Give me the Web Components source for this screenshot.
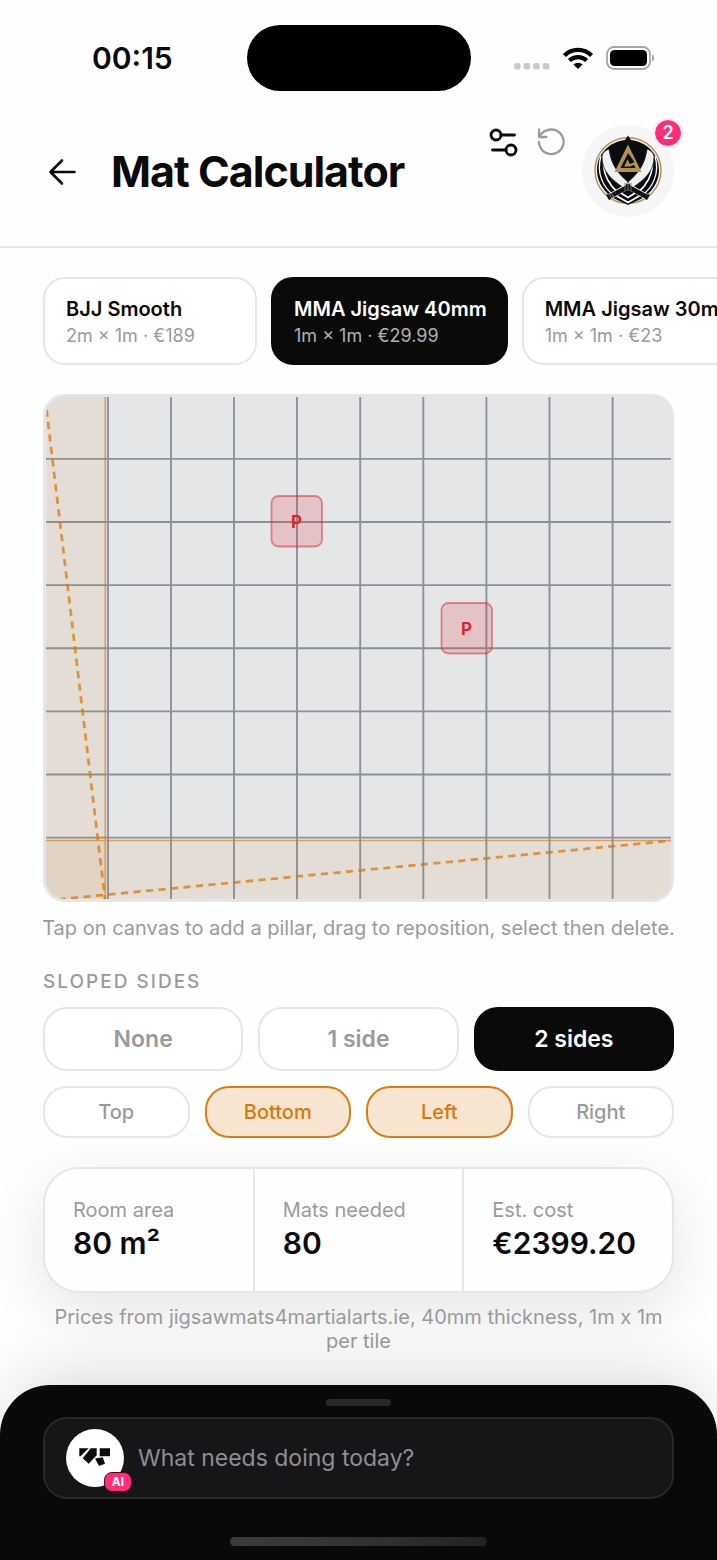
<!DOCTYPE html>
<html lang="en">
<head>
<meta charset="utf-8">
<meta name="viewport" content="width=device-width, initial-scale=1">
<title>Mat Calculator</title>
<style>
html, body { margin: 0; }
body { background: #fefefe; color: #0a0a0b; font-family: Inter, "Liberation Sans", sans-serif; font-size: 20px; line-height: 24px; --ink: #0a0a0b; --muted: #9a9a9c; --line: #e5e5ea; --amber: #d97706; --pink: #ff2d78; --gutter: 43px; }
</style>
</head>
<body>
<mat-app></mat-app>
<script>
function define(name, html) {
  const t = document.createElement('template');
  t.innerHTML = '<style>*{box-sizing:border-box}button{font:inherit;color:inherit;margin:0;cursor:pointer}svg{display:block}</style>' + html;
  customElements.define(name, class extends HTMLElement {
    constructor() { super(); this.attachShadow({ mode: 'open' }).append(t.content.cloneNode(true)); }
  });
}

define('status-bar', `
<style>
:host { display: grid; grid-template-columns: 1fr 224px 1fr; align-items: center; padding: 25px 61px 0; height: 91px; box-sizing: border-box; }
time { margin-left: 31px; font-size: 30px; font-weight: 600; line-height: 36px; }
.island { height: 66px; border-radius: 33px; background: #000; }
.icons { display: flex; justify-content: flex-end; align-items: center; gap: 12px; }
</style>
<time>00:15</time><div class="island"></div>
<div class="icons">
<svg width="36" height="24" viewBox="0 0 36 24" fill="#c9c9cb"><rect x="0" y="17" width="6.600" height="6.600" rx="2.400"/><rect x="9.600" y="17" width="6.600" height="6.600" rx="2.400"/><rect x="19.200" y="17" width="6.600" height="6.600" rx="2.400"/><rect x="28.800" y="17" width="6.600" height="6.600" rx="2.400"/></svg>
<svg width="32" height="22" viewBox="0 0 32 22"><g fill="none" stroke="#000" stroke-width="4.200"><path d="M2.400 8.400a19.300 19.300 0 0 1 27.200 0"/><path d="M7.400 13.600a12.200 12.200 0 0 1 17.200 0"/></g><path d="M11.400 17.600a6.600 6.600 0 0 1 9.200 0L16 22z"/></svg>
<svg width="50" height="24" viewBox="0 0 50 24"><rect x="1" y="1" width="43" height="22" rx="7" fill="none" stroke="#a6a6a6" stroke-width="1.800"/><rect x="4" y="4" width="37" height="16" rx="4.500" /><path d="M46 8.500c3 1 3 6 0 7z" fill="#a6a6a6"/></svg>
</div>`);

define('team-avatar', `
<style>
:host { display: block; position: relative; width: 92px; height: 92px; }
.face { width: 92px; height: 92px; padding: 0; border: 0; border-radius: 50%; background: #f6f6f7; display: grid; place-items: center; }
.badge { position: absolute; top: -7px; right: -9px; width: 30px; height: 30px; border-radius: 50%; border: 2px solid #fff; outline: 1px solid #ffe0eb; outline-offset: -1px; background: var(--pink); background-clip: padding-box; color: #fff; font-size: 18px; font-weight: 600; line-height: 26px; text-align: center; }
</style>
<button class="face" aria-label="Team profile">
<svg width="72" height="72" viewBox="0 0 72 72">
<ellipse cx="36" cy="35.500" rx="33" ry="32.800" fill="#f6f6f7" stroke="#b39252" stroke-width="1.500"/>
<path d="M36 .5l3 4.500c17 2 28 15 28 30 0 13-8 23-17 28.500L36 70l-14-6.500C13 58 5 48 5 35 5 20 16 7 33 5z" fill="#0b0c0f"/>
<path d="M9 21C4 38 11 53 23 61M63 21c5 17-2 32-14 40" fill="none" stroke="#fff" stroke-width="1.300"/>
<path d="M11.500 30c1 13 7 21 14 27M60.500 30c-1 13-7 21-14 27" fill="none" stroke="#fff" stroke-width="1.700"/>
<path d="M17 14c-5 2-7 5-7 8 0 13 8 22 22 31l4-6C24 37 19 28 17 14zM55 14c5 2 7 5 7 8 0 13-8 22-22 31l-4-6c12-10 17-19 19-33z" fill="#f1f1f2" stroke="#111" stroke-width=".7"/>
<path d="M24 60.500l12 7 12-7M28 57.500l8 5 8-5" fill="none" stroke="#fff" stroke-width="1.700"/>
<path d="M38 50L14.500 63.500M34 50l23.500 13.500" stroke="#f6f6f7" stroke-width="6"/>
<path d="M38.500 50.500L16 62.500M33.500 50.500L56 62.500" stroke="#111216" stroke-width="4.800"/>
<path d="M15 59.500l3 5M54 64.500l3-5" stroke="#111216" stroke-width="2.400"/>
<path d="M19.500 58.500l2.500 4M17.500 59.500l2.500 4" stroke="#b39252" stroke-width=".9"/>
<path d="M33 48v8M36 47v9M39 48v8" stroke="#777" stroke-width=".9"/>
<path fill-rule="evenodd" d="M36 9.500L49.500 37h-27zM36 18l-7.500 15h15l-1.500-3h-4.500l5-3z" fill="#b39252"/>
<path d="M35.500 24.500l2.200 4.300 6.300-.3-5.500 3h-6.400z" fill="#b39252"/>
</svg></button><span class="badge">2</span>`);

define('page-header', `
<style>
:host { display: flex; align-items: flex-start; padding: 34px var(--gutter) 29px; border-bottom: 2px solid #e6e6e9; }
button.icon { background: none; border: 0; padding: 0; display: block; }
.back { margin-top: 27px; width: 40px; height: 40px; }
h1 { flex: 1; margin: 20px 0 0 28px; font-size: 43px; line-height: 52px; font-weight: 700; letter-spacing: -1px; white-space: nowrap; }
.tools { display: flex; gap: 17px; margin-right: 16px; }
</style>
<button class="icon back" aria-label="Back"><svg width="40" height="40" viewBox="0 0 40 40" fill="none" stroke="#0a0a0b" stroke-width="2.600" stroke-linecap="round" stroke-linejoin="round"><path d="M31.500 20H8M19 8.500L7.500 20 19 31.500"/></svg></button>
<h1>Mat Calculator</h1>
<div class="tools">
<button class="icon" aria-label="Settings"><svg width="30" height="34" viewBox="0 0 30 34" fill="none" stroke="#0a0a0b" stroke-width="2.800" stroke-linecap="round"><circle cx="7" cy="10" r="5"/><path d="M12 10h13.500"/><circle cx="22" cy="25" r="5"/><path d="M17 25H3.500"/></svg></button>
<button class="icon" aria-label="Reset"><svg width="30" height="32" viewBox="0 0 30 32" fill="none" stroke="#9c9c9e" stroke-width="2.300" stroke-linecap="round" stroke-linejoin="round"><path d="M3 3.500V11h7.500M3 11C6 6 10 3.500 15.300 3.500A12.300 12.300 0 1 1 3 16"/></svg></button>
</div>
<team-avatar></team-avatar>`);

define('mat-card', `
<style>
:host { display: block; flex: none; }
button { height: 88px; min-width: 214px; padding: 2px 19px 0 21px; border: 2px solid var(--line); border-radius: 22px; background: #fff; text-align: left; white-space: nowrap; display: block; }
strong, small { display: block; }
strong { font-size: 20px; line-height: 28px; font-weight: 600; }
small { font-size: 18px; line-height: 26px; color: var(--muted); }
:host([selected]) button { background: var(--ink); border-color: var(--ink); color: #fff; }
:host([selected]) small { color: #b0b0b2; }
</style>
<button><strong><slot></slot></strong><small><slot name="spec"></slot></small></button>`);

define('room-canvas', `
<style>
:host { display: block; border: 3px solid var(--line); border-radius: 22px; overflow: hidden; background: #e4e6e8; }
svg { width: 100%; height: auto; }
text { font: 700 17px Inter, "Liberation Sans", sans-serif; fill: #dc2626; text-anchor: middle; }
</style>
<svg viewBox="0 0 625 502" role="img" aria-label="Room plan">
<g stroke="#8b919b" stroke-width="1.900"><path d="M62 0V502M125 0V502M188 0V502M251 0V502M314.200 0V502M377.300 0V502M440.400 0V502M503.500 0V502M566.600 0V502"/><path d="M0 61.900H625M0 125H625M0 188.100H625M0 251.200H625M0 314.400H625M0 377.500H625M0 440.600H625"/></g>
<g fill="#d97706" fill-opacity=".08"><path d="M0 0h60v502H0z"/><path d="M0 443h625v59H0z"/></g>
<path d="M59.300 0V502M0 443.500H625" stroke="#d97706" stroke-opacity=".6" stroke-width="1.700"/>
<path d="M-1 0L59 502M0 503.500L627 443.500" fill="none" stroke="#d97706" stroke-opacity=".75" stroke-width="2.700" stroke-dasharray="7.200 5.350"/>
<g fill="#dc2626" fill-opacity=".18" stroke="#dc2626" stroke-opacity=".5" stroke-width="1.800"><rect x="225.500" y="99" width="50.500" height="50.500" rx="7"/><rect x="395.500" y="206" width="50.500" height="50.500" rx="7"/></g>
<text x="250.500" y="131">P</text><text x="420.500" y="238">P</text>
</svg>`);

define('side-count', `
<style>
:host { display: block; flex: 1 1 0; }
button { width: 100%; height: 64px; padding: 0; border: 2px solid var(--line); border-radius: 24px; background: #fff; color: var(--muted); font-size: 23px; font-weight: 600; line-height: 28px; }
:host([selected]) button { background: var(--ink); border-color: var(--ink); color: #fff; }
</style><button><slot></slot></button>`);

define('side-pick', `
<style>
:host { display: block; flex: 1 1 0; }
button { width: 100%; height: 52px; padding: 0; border: 2px solid var(--line); border-radius: 24px; background: #fff; color: var(--muted); font-size: 20px; font-weight: 500; line-height: 24px; }
:host([selected]) button { background: #f7e5d2; border-color: #db7c10; color: var(--amber); }
</style><button><slot></slot></button>`);

define('stat-cell', `
<style>
:host { display: block; flex: 1 1 0; padding: 28px 0 28px 28px; }
:host(:not(:first-child)) { border-left: 2px solid var(--line); }
span, b { display: block; white-space: nowrap; }
span { color: var(--muted); font-size: 20px; line-height: 26px; }
b { font-size: 30px; line-height: 40px; font-weight: 600; }
</style><span><slot name="label"></slot></span><b><slot></slot></b>`);

define('stat-panel', `
<style>
:host { display: flex; border: 2px solid var(--line); border-radius: 36px; background: #fefefe; box-shadow: 0 18px 60px rgba(10,10,20,.1); }
</style><slot></slot>`);

define('ask-bar', `
<style>
:host { display: block; background: #09090b; border-radius: 50px 50px 0 0; padding: 14px var(--gutter); box-shadow: 0 -20px 70px -20px rgba(20,24,34,.2); }
.grab { width: 65px; height: 7px; border-radius: 4px; background: #29292c; margin: 0 auto 11px; }
label { display: flex; align-items: center; gap: 14px; height: 82px; padding: 0 21px; border: 2px solid #28282b; border-radius: 24px; background: #161618; }
.logo { position: relative; width: 58px; height: 58px; border-radius: 50%; background: #fff; flex: none; }
.ai { position: absolute; right: -8px; bottom: -5px; width: 28px; height: 20px; border: 1px solid #3a1020; border-radius: 8px; background: var(--pink); color: #fff; font-size: 12px; font-weight: 700; line-height: 18px; text-align: center; }
input { flex: 1; min-width: 0; background: none; border: 0; padding: 0; outline: 0; color: #fff; font: 400 23px/30px Inter, "Liberation Sans", sans-serif; }
input::placeholder { color: #8e8e96; opacity: 1; }
.home { width: 257px; height: 9px; border-radius: 5px; background: linear-gradient(90deg,#3c3c3c,#303030 60%,#222); margin: 38px auto 0; }
</style>
<div class="grab"></div>
<label><span class="logo"><svg width="58" height="58" viewBox="0 0 58 58" fill="#0a0a0b"><path d="M13.300 19.300h9.400L14.500 27.300h-1.200zM24.700 19.300h6v7L22.700 34.700l-6-5.400zM33.700 19.300H44v8H33.700zM29 29.500l7.700-1.200L39 34.700 33 37z"/></svg><span class="ai">AI</span></span>
<input type="text" aria-label="Ask" placeholder="What needs doing today?"></label>
<div class="home"></div>`);

define('mat-app', `
<style>
:host { display: flex; flex-direction: column; min-height: 100vh; overflow: hidden; }
main { flex: 1; padding: 29px var(--gutter) 0; }
.mats { display: flex; gap: 14px; margin-right: calc(var(--gutter) * -1); overflow: hidden; margin-bottom: 29px; }
p { margin: 0; text-align: center; color: var(--muted); font-size: 20px; line-height: 24px; }
.hint { margin: 14px -8px 0; }
h2 { margin: 30px 0 13px; font-size: 19px; line-height: 24px; font-weight: 500; letter-spacing: 2px; color: var(--muted); }
.row { display: flex; gap: 15px; margin-bottom: 15px; }
stat-panel { margin: 29px 0 12px; }
ask-bar { position: relative; margin-top: 32px; }
.note { position: relative; }
</style>
<status-bar></status-bar>
<page-header></page-header>
<main>
<div class="mats"><mat-card>BJJ Smooth<span slot="spec">2m × 1m · €189</span></mat-card><mat-card selected>MMA Jigsaw 40mm<span slot="spec">1m × 1m · €29.99</span></mat-card><mat-card>MMA Jigsaw 30mm<span slot="spec">1m × 1m · €23</span></mat-card></div>
<room-canvas></room-canvas>
<p class="hint">Tap on canvas to add a pillar, drag to reposition, select then delete.</p>
<h2>SLOPED SIDES</h2>
<div class="row"><side-count>None</side-count><side-count>1 side</side-count><side-count selected>2 sides</side-count></div>
<div class="row"><side-pick>Top</side-pick><side-pick selected>Bottom</side-pick><side-pick selected>Left</side-pick><side-pick>Right</side-pick></div>
<stat-panel><stat-cell><span slot="label">Room area</span>80 m²</stat-cell><stat-cell><span slot="label">Mats needed</span>80</stat-cell><stat-cell><span slot="label">Est. cost</span>€2399.20</stat-cell></stat-panel>
<p class="note">Prices from jigsawmats4martialarts.ie, 40mm thickness, 1m x 1m per tile</p>
</main>
<ask-bar></ask-bar>`);
</script>
</body>
</html>
